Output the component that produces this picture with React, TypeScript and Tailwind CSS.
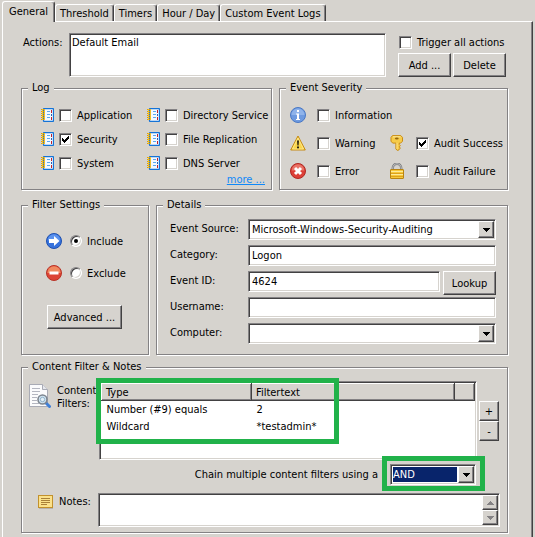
import React, { useState } from 'react';
import clsx from 'clsx';

const sunken =
  'bg-white border border-t-[#848284] border-l-[#848284] border-r-white border-b-white shadow-[inset_1px_1px_0_#424142,inset_-1px_-1px_0_#d6d3ce]';
const raised =
  'bg-[#d6d3ce] border border-t-white border-l-white border-r-[#424142] border-b-[#424142] shadow-[inset_-1px_-1px_0_#848284]';

const LogIcon = () => (
  <svg className="h-[14px] w-[13px] shrink-0" viewBox="0 0 13 14">
    <rect x="2.5" y="0.5" width="10" height="13" rx="1" fill="#f4f9ff" stroke="#1573d6" strokeWidth="1.3" />
    <path d="M6 3.5h3M6 6.5h3M6 9.5h3" stroke="#5aa7f0" />
    <path d="M10.5 2v3M10.5 9v3" stroke="#c0202c" />
    <path d="M10.5 6v2" stroke="#2b5fae" />
    <path d="M0 1.5h4M0 3.5h4M0 5.5h4M0 7.5h4M0 9.5h4M0 11.5h4" stroke="#d9a00c" />
    <path d="M1.5 1v11M3.5 1v11" stroke="#eebd2c" />
  </svg>
);

const InfoIcon = () => (
  <svg className="size-4 shrink-0" viewBox="0 0 16 16">
    <circle cx="8" cy="8" r="7.5" fill="#6f9be0" stroke="#4a78c4" />
    <path d="M1.5 8a6.5 6.5 0 0 1 13 0z" fill="#8fb3ea" />
    <rect x="7" y="3" width="2" height="2" fill="#fff" />
    <path d="M6 6.5h3V12h1v1H6v-1h1V7.5H6z" fill="#fff" />
  </svg>
);

const WarningIcon = () => (
  <svg className="size-4 shrink-0" viewBox="0 0 16 16">
    <path d="M8 1 15.3 15H.7z" fill="#fbd64a" stroke="#c58a12" strokeLinejoin="round" />
    <path d="M8 3 13.5 14h-11z" fill="none" stroke="#fdeea0" strokeWidth="0.7" />
    <path d="M7 5.5h2l-.4 5H7.4z" fill="#2b2410" />
    <rect x="7" y="11.5" width="2" height="1.8" fill="#2b2410" />
  </svg>
);

const ErrorIcon = () => (
  <svg className="size-4 shrink-0" viewBox="0 0 16 16">
    <circle cx="8" cy="8" r="7.5" fill="#dc4038" stroke="#b02822" />
    <path d="M1.8 7.5a6.2 6.2 0 0 1 12.4 0z" fill="#e97468" />
    <path d="m5 5 6 6M11 5l-6 6" stroke="#fff" strokeWidth="3" />
  </svg>
);

const KeyIcon = () => (
  <svg className="size-4 shrink-0" viewBox="0 0 16 16">
    <path
      d="M3.5.6h8.3l1.7 1.8v3.8l-1.8 1.9h-1.4v1.5l1 1.1-1 1.1 1 1.3-1.3 1.7-1.4.7-1.7-1.4V8.1H3.7L2 6.2V2.4z"
      fill="#f6cb49"
      stroke="#c98d16"
    />
    <path d="M4 1.8h7.5" stroke="#fdeaa0" />
    <path d="M8 8v6" stroke="#fbe28a" />
    <ellipse cx="7.8" cy="3.6" rx="1.9" ry="1" fill="#94660f" />
  </svg>
);

const LockIcon = () => (
  <svg className="size-4 shrink-0" viewBox="0 0 16 16">
    <path d="M3.8 7V5a4.2 4.2 0 0 1 8.4 0v2" fill="none" stroke="#77787a" strokeWidth="2.4" />
    <path d="M3.8 7V5a4.2 4.2 0 0 1 8.4 0v2" fill="none" stroke="#c3c4c6" />
    <rect x="1.5" y="6.5" width="13" height="9" rx="0.5" fill="#f7c93a" stroke="#b98410" />
    <path d="M2 8.5h12M2 11.5h12" stroke="#fdeb9a" />
    <path d="M2 10.5h12M2 13.5h12" stroke="#dda21c" />
  </svg>
);

const IncludeIcon = () => (
  <svg className="size-4 shrink-0" viewBox="0 0 16 16">
    <circle cx="8" cy="8" r="7.5" fill="#3672dc" stroke="#1f50b0" />
    <path d="M1.8 7.5a6.2 6.2 0 0 1 12.4 0z" fill="#5b92ee" />
    <path d="M3 6h5V3l5.5 5L8 13v-3H3z" fill="#fff" />
  </svg>
);

const ExcludeIcon = () => (
  <svg className="size-4 shrink-0" viewBox="0 0 16 16">
    <circle cx="8" cy="8" r="7.5" fill="#dc4436" stroke="#b83226" />
    <path d="M1.3 8a6.7 6.7 0 0 1 13.4 0z" fill="#f08a60" />
    <rect x="3.5" y="6.5" width="9" height="3" fill="#fff" />
  </svg>
);

const ContentIcon = () => (
  <svg className="h-6 w-[22px] shrink-0" viewBox="0 0 22 24">
    <path d="M.5.5h13l5 5v17H.5z" fill="#fbfbfc" stroke="#a9abb5" />
    <path d="M13.5.5v5h5" fill="#e6e7ec" stroke="#a9abb5" />
    <path d="M3 4.5h8M3 7.5h8M3 10.5h6M3 13.5h5M3 16.5h5M3 19.5h7" stroke="#b4b6c0" />
    <path d="m17 19 3.5 3.5" stroke="#3f7fd6" strokeWidth="3" strokeLinecap="round" />
    <circle cx="13.5" cy="15.5" r="4.5" fill="#cfe3f1" stroke="#7d858f" strokeWidth="1.6" />
    <circle cx="13.5" cy="15.5" r="2.2" fill="#e4f1f9" stroke="#8fb0c8" />
  </svg>
);

const NotesIcon = () => (
  <svg className="h-[14px] w-[15px] shrink-0" viewBox="0 0 15 14">
    <rect x="0.5" y="0.5" width="14" height="12" fill="#fbe18a" stroke="#c2912c" />
    <path d="M3 3.5h9M3 5.5h9M3 7.5h9M3 9.5h6" stroke="#a98138" />
    <path d="M1 13.5h14" stroke="#b5b2ad" />
  </svg>
);

const Arrow: React.FC<{ up?: boolean; muted?: boolean }> = ({ up, muted }) => (
  <svg className={clsx('h-1 w-[7px]', muted ? 'text-[#848284]' : 'text-black')} viewBox="0 0 7 4" shapeRendering="crispEdges">
    <path d={up ? 'M3 0h1v1h1v1h1v1h1v1H0V3h1V2h1V1h1z' : 'M0 0h7v1H6v1H5v1H4v1H3V3H2V2H1V1H0z'} fill="currentColor" />
  </svg>
);

const Group: React.FC<{
  title: string;
  className?: string;
  bodyClassName?: string;
  children: React.ReactNode;
}> = ({ title, className, bodyClassName, children }) => (
  <fieldset className={clsx('min-w-0 border border-[#848284] shadow-[1px_1px_0_#fff,inset_1px_1px_0_#fff]', className)}>
    <legend className="ml-1.5 bg-[#d6d3ce] px-1 leading-4">{title}</legend>
    <div className={bodyClassName}>{children}</div>
  </fieldset>
);

const Check: React.FC<{
  label: string;
  icon?: React.ReactNode;
  defaultChecked?: boolean;
  className?: string;
}> = ({ label, icon, defaultChecked, className }) => (
  <label className={clsx('flex items-center whitespace-nowrap', className)}>
    {icon}
    <span className="grid shrink-0 place-items-center">
      <input
        type="checkbox"
        defaultChecked={defaultChecked}
        className={clsx('peer col-start-1 row-start-1 size-[13px] appearance-none', sunken)}
      />
      <svg
        className="pointer-events-none invisible col-start-1 row-start-1 size-[7px] peer-checked:visible"
        viewBox="0 0 7 7"
        shapeRendering="crispEdges"
      >
        <path d="M0 2h1v1h1v1h1V3h1V2h1V1h1V0h1v3H6v1H5v1H4v1H3v1H2V6H1V5H0z" />
      </svg>
    </span>
    <span>{label}</span>
  </label>
);

const SelectBox: React.FC<{ id: string; options: string[]; highlighted?: boolean }> = ({ id, options, highlighted }) => (
  <div className={clsx('relative flex h-[21px] w-full items-center p-px', sunken)}>
    <select
      id={id}
      className={clsx(
        'w-full appearance-none outline-none',
        highlighted ? 'mr-[17px] ml-px h-[15px] bg-[#08246b] text-white' : 'h-[15px] pl-[2px]'
      )}
    >
      {options.map((option) => (
        <option key={option}>{option}</option>
      ))}
    </select>
    <span className={clsx('pointer-events-none absolute top-px right-px flex h-[17px] w-4 items-center justify-center', raised)}>
      <Arrow />
    </span>
  </div>
);

const Field: React.FC<{ id: string; label: string; children: React.ReactNode }> = ({ id, label, children }) => (
  <div className="flex h-[21px] items-start">
    <label htmlFor={id} className="w-[78px] shrink-0 leading-5">{label}</label>
    {children}
  </div>
);

const textInput = clsx('h-[21px] w-full min-w-0 px-[3px] outline-none', sunken);
const tabs = ['General', 'Threshold', 'Timers', 'Hour / Day', 'Custom Event Logs'];

const App: React.FC = () => {
  const [activeTab, setActiveTab] = useState('General');
  const [filters, setFilters] = useState([
    { type: 'Number (#9) equals', text: '2' },
    { type: 'Wildcard', text: '*testadmin*' },
  ]);

  return (
    <div className="flex min-h-screen flex-col bg-[#d6d3ce] pr-[2px] pl-[2px] font-['DejaVu_Sans_Condensed','Noto_Sans',sans-serif] text-[11px] leading-[13px] text-black">
      {/* Tabs */}
      <div role="tablist" className="flex h-[22px] items-end pb-px">
        {tabs.map((tab) => (
          <button
            key={tab}
            type="button"
            role="tab"
            aria-selected={tab === activeTab}
            onClick={() => setActiveTab(tab)}
            className={clsx(
              'rounded-t-[3px] border border-b-0 border-t-white border-l-white border-r-[#424142] bg-[#d6d3ce] whitespace-nowrap shadow-[inset_-1px_0_0_#848284]',
              tab === activeTab ? 'z-10 -mb-px h-[21px] px-1.5 pb-0.5' : 'h-[17px] px-1'
            )}
          >
            {tab}
          </button>
        ))}
      </div>

      <main className="-mt-px flex-1 border-t border-r border-l border-t-white border-r-[#424142] border-l-white pt-[11px] pr-6 pb-1 pl-[18px] shadow-[inset_-1px_0_0_#848284]">
        {/* Actions */}
        <div className="flex pr-[2px]">
          <label htmlFor="actions" className="w-12 shrink-0 pt-[3px] pl-[2px]">Actions:</label>
          <textarea id="actions" defaultValue="Default Email" className={clsx('h-11 min-w-0 flex-1 resize-none px-[2px] py-[2px] outline-none', sunken)} />
          <div className="ml-3 flex w-[108px] flex-col justify-between pt-[3px]">
            <Check label="Trigger all actions" className="h-[13px] gap-[5px] pl-px" />
            <div className="flex gap-[2px]">
              <button type="button" className={clsx('h-6 flex-1', raised)}>Add ...</button>
              <button type="button" className={clsx('h-6 flex-1', raised)}>Delete</button>
            </div>
          </div>
        </div>

        <div className="mt-[3px] flex gap-[7px]">
          <Group title="Log" className="w-[251px] shrink-0" bodyClassName="pt-[7px] pr-1.5 pb-[2px]">
            <div className="grid grid-cols-[106px_1fr] pl-[19px]">
              <Check icon={<LogIcon />} label="Application" className="h-6 gap-[5px]" />
              <Check icon={<LogIcon />} label="Directory Service" className="h-6 gap-[5px]" />
              <Check icon={<LogIcon />} label="Security" defaultChecked className="h-6 gap-[5px]" />
              <Check icon={<LogIcon />} label="File Replication" className="h-6 gap-[5px]" />
              <Check icon={<LogIcon />} label="System" className="h-6 gap-[5px]" />
              <Check icon={<LogIcon />} label="DNS Server" className="h-6 gap-[5px]" />
            </div>
            <div className="flex h-3 justify-end leading-[10px]">
              <a href="#more" className="text-[#1088f8] underline">more ...</a>
            </div>
          </Group>

          <Group title="Event Severity" className="flex-1" bodyClassName="pt-[5px] pb-1">
            <div className="grid grid-cols-[99px_1fr] pl-2.5">
              <Check icon={<InfoIcon />} label="Information" className="col-span-2 h-7 gap-[5px] [&>svg]:mr-1.5" />
              <Check icon={<WarningIcon />} label="Warning" className="h-7 gap-[5px] [&>svg]:mr-1.5" />
              <Check icon={<KeyIcon />} label="Audit Success" defaultChecked className="h-7 gap-[5px] [&>svg]:mr-1.5" />
              <Check icon={<ErrorIcon />} label="Error" className="h-7 gap-[5px] [&>svg]:mr-1.5" />
              <Check icon={<LockIcon />} label="Audit Failure" className="h-7 gap-[5px] [&>svg]:mr-1.5" />
            </div>
          </Group>
        </div>

        <div className="mt-[7px] flex gap-[7px]">
          <Group title="Filter Settings" className="w-32 shrink-0" bodyClassName="pt-3 pl-6">
            {['Include', 'Exclude'].map((mode) => (
              <label key={mode} className="flex h-8 items-center">
                {mode === 'Include' ? <IncludeIcon /> : <ExcludeIcon />}
                <span className="mr-[5px] ml-2 grid place-items-center">
                  <input
                    type="radio"
                    name="mode"
                    defaultChecked={mode === 'Include'}
                    className={clsx('peer col-start-1 row-start-1 size-3 appearance-none rounded-full', sunken)}
                  />
                  <span className="pointer-events-none invisible col-start-1 row-start-1 size-1 rounded-full bg-black peer-checked:visible" />
                </span>
                {mode}
              </label>
            ))}
            <button type="button" className={clsx('mt-4 ml-px h-6 w-[75px]', raised)}>Advanced ...</button>
          </Group>

          <Group title="Details" className="flex-1" bodyClassName="pt-1.5 pr-[11px] pb-2.5 pl-[13px]">
            <div className="flex flex-col gap-[5px]">
              <Field id="source" label="Event Source:">
                <SelectBox id="source" options={['Microsoft-Windows-Security-Auditing']} />
              </Field>
              <Field id="category" label="Category:">
                <input id="category" defaultValue="Logon" className={textInput} />
              </Field>
              <Field id="event-id" label="Event ID:">
                <input id="event-id" defaultValue="4624" className={textInput} />
                <button type="button" className={clsx('ml-[3px] h-6 w-[53px] shrink-0', raised)}>Lookup</button>
              </Field>
              <Field id="username" label="Username:">
                <input id="username" className={textInput} />
              </Field>
              <Field id="computer" label="Computer:">
                <SelectBox id="computer" options={['']} />
              </Field>
            </div>
          </Group>
        </div>

        <Group title="Content Filter & Notes" className="mt-1" bodyClassName="pt-1.5 pr-[7px] pb-[5px] pl-[7px]">
          <div className="flex">
            <div className="flex w-[70px] shrink-0 gap-1.5 pt-[3px]">
              <ContentIcon />
              <span>Content Filters:</span>
            </div>
            <div className={clsx('relative h-[79px] flex-1 p-px', sunken)}>
              <table className="w-full table-fixed border-collapse text-left">
                <thead>
                  <tr className="h-[17px]">
                    <th className={clsx('w-[150px] px-1 font-normal', raised)}>Type</th>
                    <th className={clsx('px-1 font-normal', raised)}>Filtertext</th>
                    <th className={clsx('w-5', raised)} />
                  </tr>
                </thead>
                <tbody>
                  {filters.map((filter) => (
                    <tr key={filter.type} className="h-[17px]">
                      <td className="px-[5px]">{filter.type}</td>
                      <td className="px-[5px]">{filter.text}</td>
                      <td />
                    </tr>
                  ))}
                </tbody>
              </table>
              <div className="pointer-events-none absolute -top-1 -left-1 h-[66px] w-[243px] border-5 border-[#21b24a]" />
            </div>
            <div className="mt-5 mr-px ml-[2px] flex w-5 flex-col">
              <button type="button" className={clsx('h-5', raised)} onClick={() => setFilters([...filters, { type: `Wildcard ${filters.length}`, text: '*' }])}>+</button>
              <button type="button" className={clsx('h-5', raised)} onClick={() => setFilters(filters.slice(0, -1))}>-</button>
            </div>
          </div>

          <div className="mt-1 flex items-center justify-end pr-6">
            <label htmlFor="chain" className="mr-3">Chain multiple content filters using a</label>
            <div className="relative w-[86px]">
              <SelectBox id="chain" options={['AND', 'OR']} highlighted />
              <div className="pointer-events-none absolute -top-2 -right-[9px] -bottom-1.5 -left-2 border-5 border-[#21b24a]" />
            </div>
          </div>

          <div className="mt-2 flex">
            <label htmlFor="notes" className="flex w-[69px] shrink-0 items-start gap-1.5 pt-[2px] pl-[9px]">
              <NotesIcon />
              Notes:
            </label>
            <div className={clsx('flex h-[34px] flex-1 p-px', sunken)}>
              <textarea id="notes" className="min-w-0 flex-1 resize-none px-1 outline-none" />
              <div className="flex w-4 flex-col">
                <button type="button" aria-label="Scroll up" className={clsx('flex flex-1 items-center justify-center', raised)}>
                  <Arrow up muted />
                </button>
                <button type="button" aria-label="Scroll down" className={clsx('flex flex-1 items-center justify-center', raised)}>
                  <Arrow muted />
                </button>
              </div>
            </div>
          </div>
        </Group>
      </main>
    </div>
  );
};

export default App;
